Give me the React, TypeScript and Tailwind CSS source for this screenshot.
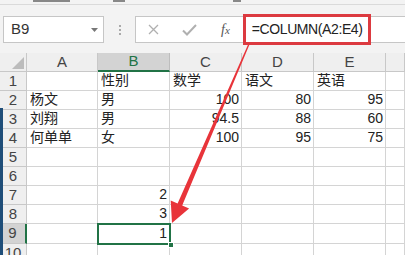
import React from 'react';

type Cell = string | number;

const columns = ['A', 'B', 'C', 'D', 'E', ''];

const rows: Cell[][] = [
    ['', '性别', '数学', '语文', '英语'],
    ['杨文', '男', 100, 80, 95],
    ['刘翔', '男', 94.5, 88, 60],
    ['何单单', '女', 100, 95, 75],
    [],
    [],
    ['', 2],
    ['', 3],
    ['', 1],
    [],
];

const gridCols = 'grid grid-cols-[27px_71px_72px_72px_72px_72px_19px]';

const App: React.FC = () => {
    return (
        <div className="relative w-[405px] h-[255px] overflow-hidden bg-white font-['Liberation_Sans','Noto_Sans_CJK_SC',sans-serif] text-[#222]">
            {/* ribbon bottom edge, labels cut off */}
            <div className="h-[5px] bg-[#f3f3f3] border-b border-[#dadada] flex items-start">
                <span className="ml-[33px] w-[37px] h-[2px] bg-[#888]" />
                <span className="ml-[43px] w-[12px] h-[2px] bg-[#888]" />
                <span className="ml-[108px] w-[8px] h-[2px] bg-[#888]" />
            </div>

            {/* name box + formula bar */}
            <div className="h-[48px] bg-[#f3f3f3] flex items-start pt-[11px]">
                <div className="ml-[3px] w-[101px] h-[27px] bg-white border border-[#c6c6c6] flex items-center justify-between pl-[7px] pr-[5px]">
                    <span className="text-[15px] text-[#333]">B9</span>
                    <svg width="7" height="4" viewBox="0 0 7 4">
                        <path d="M0 0 L7 0 L3.5 4 Z" fill="#777" />
                    </svg>
                </div>
                <div className="w-[31px] h-[27px] flex flex-col items-center justify-center gap-[2px]">
                    <span className="w-[2px] h-[2px] bg-[#aaa]" />
                    <span className="w-[2px] h-[2px] bg-[#aaa]" />
                    <span className="w-[2px] h-[2px] bg-[#aaa]" />
                </div>
                <div className="flex-1 h-[27px] bg-white border border-r-0 border-[#c6c6c6] flex items-center">
                    <svg className="ml-[12px]" width="11" height="11" viewBox="0 0 11 11">
                        <path d="M1 1 L10 10 M10 1 L1 10" stroke="#b0b0b0" strokeWidth="1.3" fill="none" />
                    </svg>
                    <svg className="ml-[23px]" width="15" height="12" viewBox="0 0 15 12">
                        <path d="M1 6.5 L5 10.5 L14 1" stroke="#b0b0b0" strokeWidth="2" fill="none" />
                    </svg>
                    <span className="ml-[24px] text-[14px] italic font-['Liberation_Serif',serif] text-[#555]">f<span className="text-[11px]">x</span></span>
                    <div className="ml-[13px] w-[128px] h-[31px] border-[3px] border-[#dc3a40] flex items-center pl-[6px]">
                        <span className="text-[14px] text-[#222] tracking-[-0.4px] whitespace-nowrap">=COLUMN(A2:E4)</span>
                    </div>
                </div>
            </div>

            {/* sheet */}
            <div className={gridCols}>
                <div className="h-[19px] bg-[#efefef] border-r border-b border-[#c8c8c8] flex items-end justify-end pr-[2px] pb-[2px]">
                    <svg width="12" height="12" viewBox="0 0 12 12">
                        <path d="M12 0 L12 12 L0 12 Z" fill="#bcbcbc" />
                    </svg>
                </div>
                {columns.map((c, i) => (
                    <div
                        key={i}
                        className={
                            c === 'B'
                                ? 'h-[19px] bg-[#d3d3d3] border-r border-[#bdbdbd] border-b-2 border-b-[#217346] flex items-center justify-center text-[15px] text-[#217346]'
                                : 'h-[19px] bg-[#efefef] border-r border-b border-[#c8c8c8] flex items-center justify-center text-[15px] text-[#444]'
                        }
                    >
                        {c}
                    </div>
                ))}

                {rows.map((row, r) => (
                    <React.Fragment key={r}>
                        <div
                            className={
                                r === 8
                                    ? 'h-[20px] bg-[#d3d3d3] border-r-2 border-r-[#217346] border-b border-[#c8c8c8] flex items-center justify-center text-[15px] text-[#444]'
                                    : 'h-[19px] bg-[#efefef] border-r border-b border-[#c8c8c8] flex items-center justify-center text-[15px] text-[#444]'
                            }
                        >
                            {r + 1}
                        </div>
                        {columns.map((_, c) => {
                            const v = row[c];
                            const isNum = typeof v === 'number';
                            return (
                                <div
                                    key={c}
                                    className={
                                        (r === 8 ? 'h-[20px] ' : 'h-[19px] ') +
                                        'border-r border-b border-[#d4d4d4] flex items-end pb-[1px] text-[14px] leading-[17px] whitespace-nowrap ' +
                                        (isNum ? 'justify-end pr-[2px]' : 'justify-start pl-[3px]')
                                    }
                                >
                                    {v}
                                </div>
                            );
                        })}
                    </React.Fragment>
                ))}
            </div>

            {/* selected cell B9 */}
            <div className="absolute left-[97px] top-[223px] w-[74px] h-[22px] border-2 border-[#217346]" />
            <div className="absolute left-[168px] top-[242px] w-[6px] h-[6px] bg-[#217346] border border-white" />

            {/* window edge */}
            <div className="absolute left-0 top-[108px] w-[3px] h-[147px] bg-[#1f4e79]" />

            {/* annotation arrow */}
            <svg className="absolute inset-0 pointer-events-none" width="405" height="255" viewBox="0 0 405 255">
                <polygon
                    points="249.6,44.3 182.2,205.6 189.1,208.6 172,223 170.7,200.6 177.6,203.6 248.4,43.7"
                    fill="#e8343a"
                />
            </svg>
        </div>
    );
};

export default App;
